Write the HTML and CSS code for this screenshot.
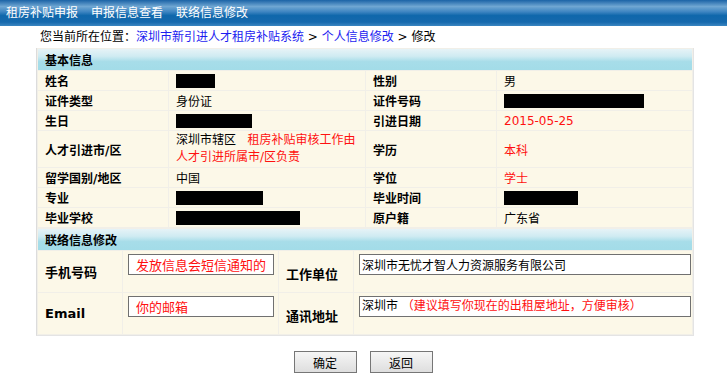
FILE: index.html
```html
<!DOCTYPE html>
<html lang="zh-CN">
<head>
<meta charset="UTF-8">
<meta name="viewport" content="width=device-width, initial-scale=1.0">
<title>联络信息修改</title>
<link rel="stylesheet" href="styles.css">
</head>
<body>

<div class="topbar">
    <a href="#">租房补贴申报</a>
    <a href="#">申报信息查看</a>
    <a href="#">联络信息修改</a>
</div>

<div class="crumb">
    您当前所在位置：<a href="#">深圳市新引进人才租房补贴系统</a> &gt; <a href="#">个人信息修改</a> &gt; 修改
</div>

<div class="panel">
    <table class="info">
        <colgroup>
            <col class="c1"><col class="c2"><col class="c3"><col class="c4">
        </colgroup>
        <tr><th colspan="4" class="head">基本信息</th></tr>
        <tr>
            <td class="lbl">姓名</td><td><span class="mask" style="width:39px"></span></td>
            <td class="lbl">性别</td><td>男</td>
        </tr>
        <tr>
            <td class="lbl">证件类型</td><td>身份证</td>
            <td class="lbl">证件号码</td><td><span class="mask" style="width:140px"></span></td>
        </tr>
        <tr>
            <td class="lbl">生日</td><td><span class="mask" style="width:76px"></span></td>
            <td class="lbl">引进日期</td><td class="red">2015-05-25</td>
        </tr>
        <tr class="tall">
            <td class="lbl">人才引进市/区</td>
            <td class="two">深圳市辖区 &nbsp;&nbsp;<span class="red">租房补贴审核工作由</span><br><span class="red">人才引进所属市/区负责</span></td>
            <td class="lbl">学历</td><td class="red">本科</td>
        </tr>
        <tr>
            <td class="lbl">留学国别/地区</td><td>中国</td>
            <td class="lbl">学位</td><td class="red">学士</td>
        </tr>
        <tr>
            <td class="lbl">专业</td><td><span class="mask" style="width:87px"></span></td>
            <td class="lbl">毕业时间</td><td><span class="mask" style="width:74px"></span></td>
        </tr>
        <tr>
            <td class="lbl">毕业学校</td><td><span class="mask" style="width:124px"></span></td>
            <td class="lbl">原户籍</td><td>广东省</td>
        </tr>
    </table>

    <table class="info contact">
        <colgroup>
            <col class="d1"><col class="d2"><col class="d3"><col class="d4">
        </colgroup>
        <tr><th colspan="4" class="head">联络信息修改</th></tr>
        <tr>
            <td class="lbl">手机号码</td>
            <td class="field"><input class="box short red" type="text" value="发放信息会短信通知的"></td>
            <td class="lbl low">工作单位</td>
            <td class="field"><input class="box long" type="text" value="深圳市无忧才智人力资源服务有限公司"></td>
        </tr>
        <tr>
            <td class="lbl">Email</td>
            <td class="field"><input class="box short red" type="text" value="你的邮箱"></td>
            <td class="lbl low">通讯地址</td>
            <td class="field"><div class="box long">深圳市 <span class="red">（建议填写你现在的出租屋地址，方便审核）</span></div></td>
        </tr>
    </table>
</div>

<div class="actions">
    <button type="button">确定</button>
    <button type="button">返回</button>
</div>

</body>
</html>
```

FILE: styles.css
```css
body {
    margin: 0;
    padding: 0;
    font-family: "DejaVu Sans", "Noto Sans CJK SC", sans-serif;
    font-size: 12px;
    color: #000;
    background-color: #fff;
}
a {
    text-decoration: none;
}
.topbar {
    height: 26px;
    display: flex;
    align-items: center;
    gap: 13px;
    padding-left: 6px;
    background: linear-gradient(to bottom, #1b63a6 0%, #6fa6d2 25%, #3f86c2 45%, #0f67ab 60%, #1669ad 85%, #3a86c1 100%);
}
.topbar a {
    color: #fff;
    font-size: 12px;
    line-height: 26px;
}
.crumb {
    height: 22px;
    line-height: 22px;
    padding-left: 40px;
}
.crumb a {
    color: #1c1cf0;
}
.panel {
    width: 656px;
    margin-left: 36px;
    border-left: 1px solid #dcdcdc;
    border-right: 1px solid #e4e4e4;
    border-bottom: 1px solid #e4e4e4;
    background-color: #f1efe8;
}
.info {
    width: 655px;
    border-collapse: separate;
    border-spacing: 1px;
    table-layout: fixed;
}
.info .c1 { width: 130px; }
.info .c2 { width: 196px; }
.info .c3 { width: 130px; }
.info .c4 { width: 195px; }
.contact .d1 { width: 84px; }
.contact .d2 { width: 155px; }
.contact .d3 { width: 74px; }
.contact .d4 { width: 338px; }
.info td {
    height: 19px;
    padding: 0 7px;
    background-color: #fcf8e8;
    white-space: nowrap;
}
.info .head {
    height: 21px;
    padding: 0 7px;
    text-align: left;
    font-weight: bold;
    background: linear-gradient(to bottom, #e6f3f7 0%, #cfebf2 35%, #a7dde9 60%, #a3dce8 100%);
}
.info .lbl {
    font-weight: bold;
}
.info .two {
    height: 35px;
    line-height: 17px;
    padding: 0 7px 1px;
}
.red {
    color: #ff1010;
}
.mask {
    display: inline-block;
    height: 14px;
    vertical-align: middle;
    background-color: #000;
}
.contact td {
    height: 37px;
    padding-top: 0;
    padding-bottom: 0;
}
.contact .lbl {
    font-size: 13px;
}
.contact .low {
    padding-top: 4px;
}
.contact .field {
    vertical-align: top;
    padding: 3px 5px 0;
}
.box {
    box-sizing: border-box;
    height: 21px;
    margin: 0;
    padding: 0 4px;
    border: 1px solid #707070;
    background-color: #fff;
    font-family: "DejaVu Sans", "Noto Sans CJK SC", sans-serif;
    font-size: 12px;
    line-height: 19px;
    color: #000;
}
.box.short {
    width: 146px;
    font-size: 13px;
    padding-left: 7px;
}
.box.long {
    width: 332px;
    padding-left: 2px;
}
.box.red {
    color: #ff1010;
}
.actions {
    display: flex;
    justify-content: center;
    gap: 13px;
    padding-top: 15px;
    padding-right: 1px;
}
.actions button {
    box-sizing: border-box;
    width: 63px;
    height: 22px;
    padding: 0;
    border: 1px solid #767676;
    background: linear-gradient(to bottom, #f6f6f6, #dedede);
    font-family: "DejaVu Sans", "Noto Sans CJK SC", sans-serif;
    font-size: 12px;
    color: #000;
}
```
